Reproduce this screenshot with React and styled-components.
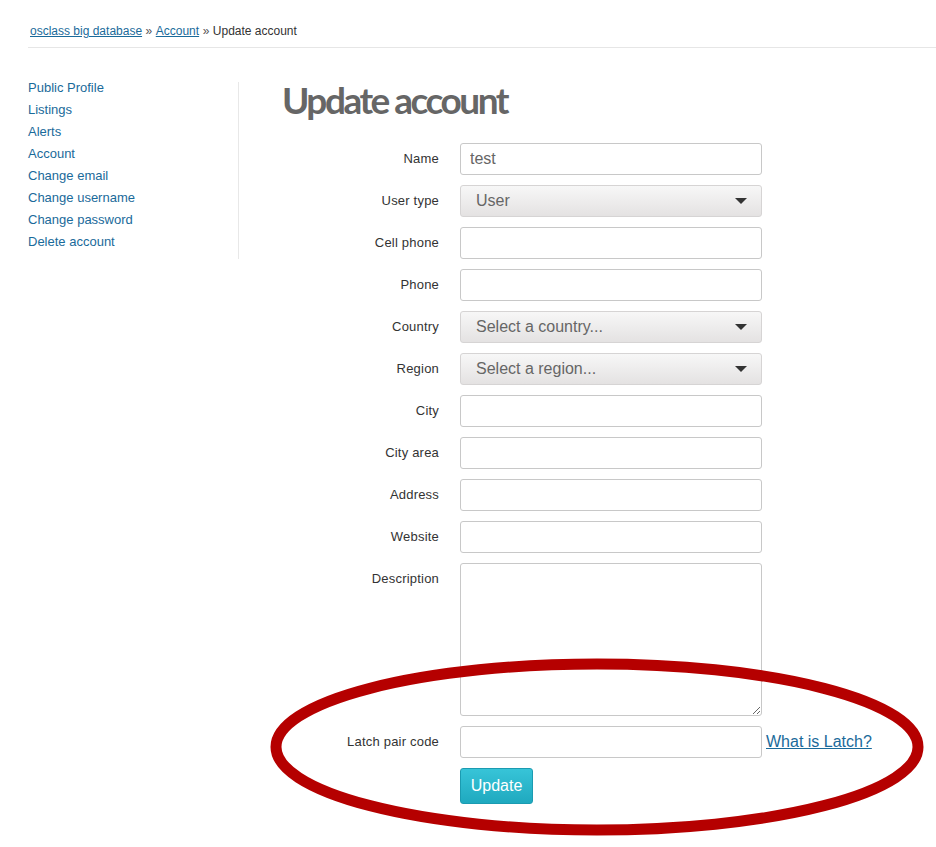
import React from "react";
import styled, { createGlobalStyle } from "styled-components";

const Global = createGlobalStyle`
  html, body { margin: 0; padding: 0; background: #fff; }
  body { font-family: "Liberation Sans", Arial, sans-serif; color: #333; }
  * { box-sizing: border-box; }
`;

const Page = styled.div`
  position: relative;
  width: 936px;
  min-height: 847px;
`;

const Header = styled.div`
  margin-left: 28px;
  padding: 23px 0 8px 2px;
  border-bottom: 1px solid #e6e6e6;
  font-size: 12px;
  line-height: 16px;
  color: #333;
`;

const Crumb = styled.a`
  color: #1a6a9a;
  text-decoration: underline;
`;

const Sep = styled.span`
  color: #555;
  margin: 0 3.5px;
`;

const Main = styled.div`
  display: flex;
  align-items: flex-start;
  padding-left: 28px;
`;

const Sidebar = styled.nav`
  width: 211px;
  height: 177px;
  margin-top: 34px;
  border-right: 1px solid #e8e8e8;
`;

const NavList = styled.ul`
  list-style: none;
  margin: -5px 0 0;
  padding: 0;
`;

const NavLink = styled.a`
  display: block;
  font-size: 13px;
  line-height: 22px;
  color: #1a6a9a;
  text-decoration: none;
`;

const Content = styled.div`
  margin-left: 43px;
  padding-top: 29px;
`;

const Title = styled.h1`
  margin: 0 0 20px;
  font-family: Lato, "Liberation Sans", sans-serif;
  font-weight: 700;
  font-size: 37px;
  line-height: 46px;
  letter-spacing: -2.5px;
  color: #666;
`;

const Form = styled.form`
  display: grid;
  grid-template-columns: 157px auto;
  column-gap: 21px;
  row-gap: 10px;
`;

const Label = styled.label`
  text-align: right;
  font-size: 13px;
  letter-spacing: 0.2px;
  line-height: 32px;
  color: #333;
`;

const Field = styled.div`
  display: flex;
  align-items: center;
  gap: 4px;
`;

const Input = styled.input`
  width: 302px;
  height: 32px;
  padding: 0 9px;
  border: 1px solid #c8c8c8;
  border-radius: 3px;
  font-family: "Liberation Sans", Arial, sans-serif;
  font-size: 16px;
  color: #666;
  background: #fff;
  outline: none;
`;

const TextArea = styled.textarea`
  width: 302px;
  height: 153px;
  padding: 6px 9px;
  border: 1px solid #c8c8c8;
  border-radius: 3px;
  font-family: "Liberation Sans", Arial, sans-serif;
  font-size: 16px;
  outline: none;
  resize: both;
  display: block;
`;

const SelectBox = styled.div`
  width: 302px;
  height: 32px;
  padding: 0 15px;
  display: flex;
  align-items: center;
  justify-content: space-between;
  border: 1px solid #d6d4d4;
  border-radius: 3px;
  background: linear-gradient(#f7f7f7, #e4e2e2);
  font-size: 16px;
  color: #666;
`;

const Arrow = styled.span`
  width: 0;
  height: 0;
  margin-right: -1px;
  border-left: 6px solid transparent;
  border-right: 6px solid transparent;
  border-top: 6px solid #333;
`;

const HelpLink = styled.a`
  font-size: 16px;
  color: #1a6a9a;
  text-decoration: underline;
`;

const Button = styled.button`
  width: 73px;
  height: 36px;
  padding: 0;
  border: 1px solid #1b9bb1;
  border-radius: 3px;
  background: linear-gradient(#37c4d8, #1fa9bf);
  color: #fff;
  font-family: "Liberation Sans", Arial, sans-serif;
  font-size: 16px;
  font-weight: 300;
`;

const Spacer = styled.div``;

const Annotation = styled.svg`
  position: absolute;
  left: 0;
  top: 0;
  pointer-events: none;
`;

const navItems = [
  "Public Profile",
  "Listings",
  "Alerts",
  "Account",
  "Change email",
  "Change username",
  "Change password",
  "Delete account",
];

const Select = ({ value }) => (
  <SelectBox>
    <span>{value}</span>
    <Arrow />
  </SelectBox>
);

export default function App() {
  return (
    <Page>
      <Global />
      <Header>
        <Crumb href="#">osclass big database</Crumb>
        <Sep>»</Sep>
        <Crumb href="#">Account</Crumb>
        <Sep>»</Sep>
        <span>Update account</span>
      </Header>
      <Main>
        <Sidebar>
          <NavList>
            {navItems.map((t) => (
              <li key={t}>
                <NavLink href="#">{t}</NavLink>
              </li>
            ))}
          </NavList>
        </Sidebar>
        <Content>
          <Title>Update account</Title>
          <Form>
            <Label>Name</Label>
            <Field><Input defaultValue="test" /></Field>
            <Label>User type</Label>
            <Field><Select value="User" /></Field>
            <Label>Cell phone</Label>
            <Field><Input /></Field>
            <Label>Phone</Label>
            <Field><Input /></Field>
            <Label>Country</Label>
            <Field><Select value="Select a country..." /></Field>
            <Label>Region</Label>
            <Field><Select value="Select a region..." /></Field>
            <Label>City</Label>
            <Field><Input /></Field>
            <Label>City area</Label>
            <Field><Input /></Field>
            <Label>Address</Label>
            <Field><Input /></Field>
            <Label>Website</Label>
            <Field><Input /></Field>
            <Label>Description</Label>
            <Field><TextArea /></Field>
            <Label>Latch pair code</Label>
            <Field>
              <Input />
              <HelpLink href="#">What is Latch?</HelpLink>
            </Field>
            <Spacer />
            <Field><Button type="button">Update</Button></Field>
          </Form>
        </Content>
      </Main>
      <Annotation width="936" height="847" viewBox="0 0 936 847">
        <ellipse cx="597" cy="747" rx="321" ry="83" fill="none" stroke="#b50000" strokeWidth="11" />
      </Annotation>
    </Page>
  );
}
